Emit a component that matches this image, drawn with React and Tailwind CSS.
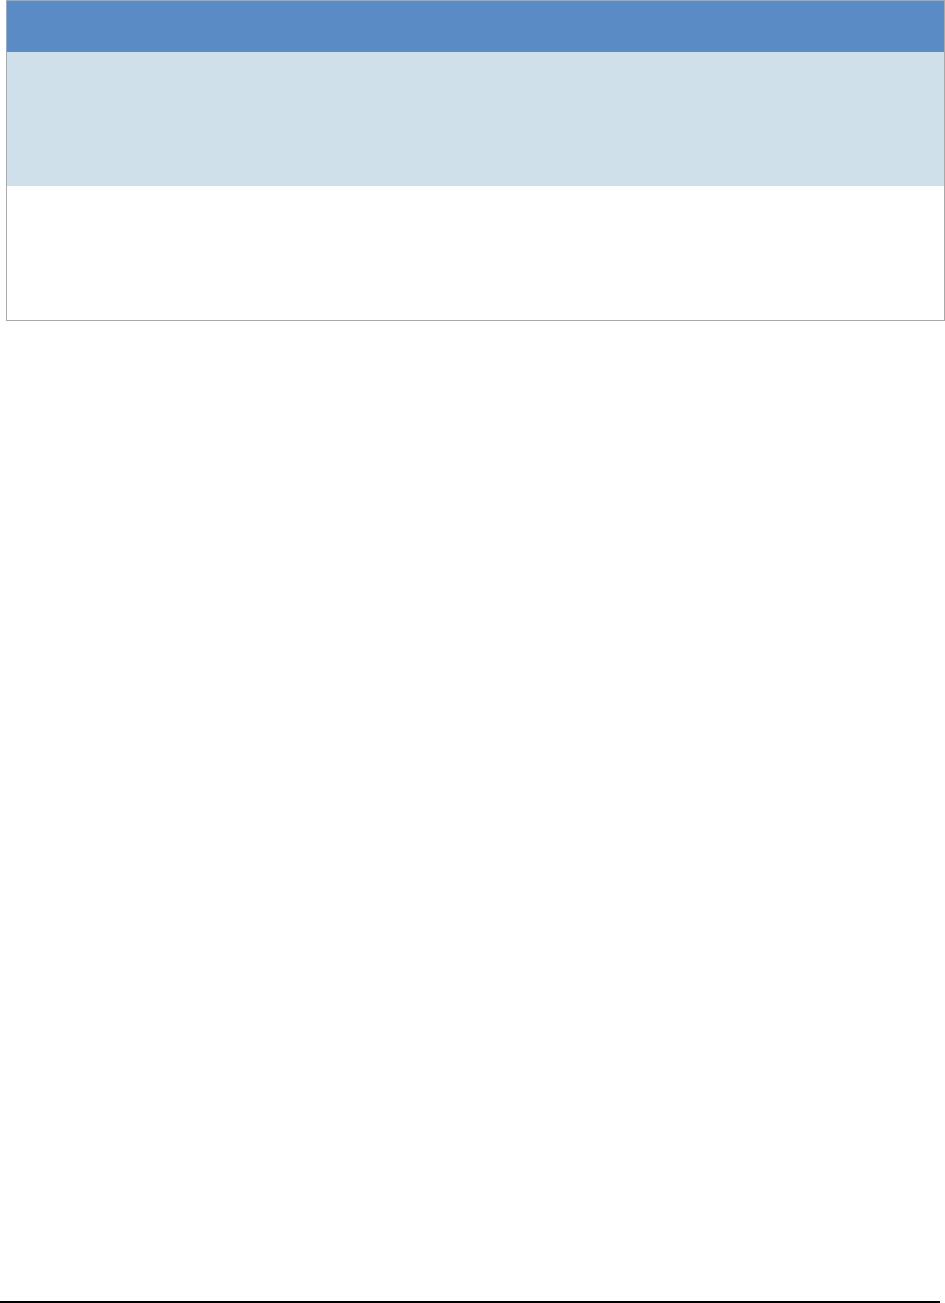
export default function App() {
  return (
    <div className="w-[945px] h-[1303px] bg-white flex flex-col">
      {/* Tabla */}
      <div className="ml-[6px] w-[939px] border border-[#a9a9a9] flex flex-col">
        <div className="h-[51px] bg-[#5b8bc4]" />
        <div className="h-[134px] bg-[#d0e0ea]" />
        <div className="h-[134px] bg-white" />
      </div>
      <div className="flex-1" />
      {/* Línea inferior */}
      <div className="w-[940px] h-[2px] bg-black" />
    </div>
  )
}
